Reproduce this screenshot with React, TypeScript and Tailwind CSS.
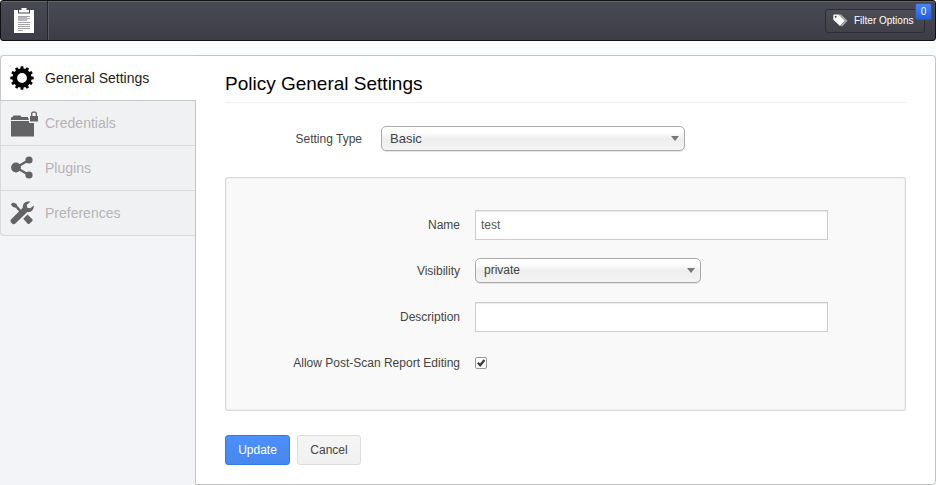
import { useState, type ReactNode } from "react";

function ClipboardIcon() {
  return (
    <svg width="20" height="25" viewBox="0 0 20 25" aria-hidden="true">
      <path fill="#fff" d="M0 2h4v3.500h12V2h4v23H0z" />
      <path fill="#fff" d="M5 2h2.500V0h5v2H15v2.500H5z" />
      <path fill="#b9b9bd" d="M4 9h9v4H4z" />
      <path stroke="#a3a3a8" strokeWidth="1" d="M4 8.500h12M13 10.500h3M4 14.500h12M4 16.500h12M4 18.500h12M4 20.500h12M4 22.500h5" />
    </svg>
  );
}

function TagsIcon() {
  return (
    <svg width="15" height="13" viewBox="0 0 15 13" aria-hidden="true">
      <path fill="#b7b7bb" d="M6 .5h2l6.500 6.200L9 12.500l-1-1 4.700-4.800z" />
      <path fill="#fff" fillRule="evenodd" d="M.3 1.200 1 .5h4.600L12 6.800 7 12 .3 5.700zM2.700 1.700a1 1 0 1 0 0 2 1 1 0 0 0 0-2z" />
    </svg>
  );
}

function GearIcon() {
  const teeth = [0, 30, 60, 90, 120, 150];
  return (
    <svg width="24" height="24" viewBox="0 0 24 24" aria-hidden="true">
      <circle cx="12" cy="12" r="7.300" fill="none" stroke="#000" strokeWidth="4.800" />
      {teeth.map((angle) => (
        <path key={angle} fill="#000" transform={`rotate(${angle} 12 12)`} d="M10.300 4 10.700.3h2.600L13.700 4zM10.300 20l.4 3.700h2.600l.4-3.700z" />
      ))}
    </svg>
  );
}

function FolderLockIcon() {
  return (
    <svg width="28" height="27" viewBox="0 0 28 27" fill="#636365" aria-hidden="true">
      <path d="M1 10V7.500L2.500 7 3.500 5.500h7L11.500 7H18v1l.7.500V10z" />
      <path d="M1 11h18v2h5v13.500H1z" />
      <path d="M20 6h8v5.500h-8z" />
      <path fill="none" stroke="#636365" strokeWidth="1.300" d="M21.700 6V3.500a1.500 1.500 0 0 1 1.300-1.300h2a1.500 1.500 0 0 1 1.300 1.300V6" />
    </svg>
  );
}

function ShareIcon() {
  return (
    <svg width="24" height="24" viewBox="0 0 24 24" fill="#636365" aria-hidden="true">
      <circle cx="6" cy="11.500" r="4.900" />
      <circle cx="19" cy="4" r="3.600" />
      <circle cx="19" cy="19" r="3.600" />
      <path fill="none" stroke="#636365" strokeWidth="2.300" d="M19 4 6 11.500 19 19" />
    </svg>
  );
}

function ToolsIcon() {
  return (
    <svg width="24" height="24" viewBox="0 0 24 24" fill="#636365" aria-hidden="true">
      <path d="M.8 3.500 2.800 1.500l3.500 1.200 1.200 2.300 4 4.500-1.800 1.800L5.700 6.800 3 6z" />
      <path d="m13.300 17.800 4.200-4.300 4.800 4.700c.5.600.5 1.200 0 1.700l-2.800 2.800c-.6.500-1.200.5-1.800 0z" />
      <path d="M20.300.8c-4-1.200-8 1.500-7.500 6L1.200 18.200c-1 1-1 2.200-.1 3.200l1.200 1.300c1 .9 2.200.8 3.100-.1l11.900-11.500c4 .5 7-3 6.400-6.500L20.300 7.200l-3-.5-.6-2.600z" />
    </svg>
  );
}

const sections = [
  { name: "General Settings", icon: <GearIcon /> },
  { name: "Credentials", icon: <FolderLockIcon /> },
  { name: "Plugins", icon: <ShareIcon /> },
  { name: "Preferences", icon: <ToolsIcon /> },
];

function SelectBox({ id, options, className }: { id: string; options: string[]; className: string }) {
  return (
    <div className={`relative max-w-full ${className}`}>
      <select
        id={id}
        className="block h-[25px] w-full appearance-none rounded-[5px] border border-[#aaa] bg-linear-to-b from-white from-20% via-[#eee] via-52% to-[#f4f4f4] px-2 leading-[23px] text-[#444] shadow-[0_1px_1px_rgba(0,0,0,0.1)]"
      >
        {options.map((option) => (
          <option key={option}>{option}</option>
        ))}
      </select>
      <svg className="pointer-events-none absolute top-[10px] right-[6px]" width="8" height="5" viewBox="0 0 8 5" aria-hidden="true">
        <path fill="#777" d="M0 0h8L4 5z" />
      </svg>
    </div>
  );
}

function FieldRow({ id, label, children }: { id: string; label: string; children: ReactNode }) {
  return (
    <div className="flex items-center gap-[15px]">
      <label htmlFor={id} className="w-[234px] shrink-0 text-right text-[12px] leading-4">
        {label}
      </label>
      {children}
    </div>
  );
}

const textBox =
  "h-[30px] w-[353px] min-w-0 border border-[#ccc] bg-white px-[5px] text-[12px] text-[#555] shadow-[inset_0_1px_1px_rgba(0,0,0,0.08)]";

export default function App() {
  const [name, setName] = useState("test");
  const [description, setDescription] = useState("");
  const [editing, setEditing] = useState(true);

  return (
    <div className="flex min-h-screen flex-col bg-[#f3f4f8] font-['Liberation_Sans',Arial,sans-serif] text-[#444]">
      <header className="flex h-[41px] items-stretch justify-between rounded-[3px] border border-[#111] bg-linear-to-b from-[#484a54] to-[#3d3d47] shadow-[inset_0_1px_0_#64646c]">
        <a href="#policies" aria-label="Policies" className="flex w-[47px] items-center justify-center border-r border-[#25252b] shadow-[1px_0_0_#5b5b63]">
          <ClipboardIcon />
        </a>
        <div className="relative mr-[10px] self-center">
          <button type="button" className="flex h-6 w-[100px] items-center gap-[6px] rounded-[3px] border border-[#2d2d33] bg-linear-to-b from-[#4c4d55] to-[#414148] pl-[7px] text-[10px] font-medium whitespace-nowrap text-white">
            <TagsIcon />
            Filter Options
          </button>
          <span className="absolute -top-[6px] -right-[7px] flex h-[17px] w-[17px] items-center justify-center rounded-[2px] border border-[#1f57c8] bg-linear-to-b from-[#4686f6] to-[#2360df] text-[10px] text-white">
            0
          </span>
        </div>
      </header>

      <div className="h-[14px] bg-[#fbfcfe]" />

      <div className="flex grow items-stretch">
        <nav className="w-[195px] shrink-0">
          <ul>
            {sections.map((section, index) => (
              <li
                key={section.name}
                className={
                  index === 0
                    ? "relative -mr-px rounded-tl-[4px] border-t border-b border-l border-[#c8c8c8] bg-white text-[#222]"
                    : "border-b border-l border-[#d9d9db] bg-[#f0f1f3] text-[#b4b4b6] last:rounded-bl-[4px]"
                }
              >
                <a href="#section" className="flex h-11 items-center text-[14px]">
                  <span className="ml-[9px] flex w-[35px] items-center">{section.icon}</span>
                  {section.name}
                </a>
              </li>
            ))}
          </ul>
        </nav>

        <main className="min-w-0 grow rounded-r-[4px] rounded-bl-[2px] border border-[#c4c4c4] bg-white px-[29px] pb-[19px]">
          <h1 className="border-b border-[#eee] pt-[16px] pb-[6px] text-[19px] leading-6 text-black">
            Policy General Settings
          </h1>

          <div className="mt-[23px] flex items-center gap-[19px]">
            <label htmlFor="setting-type" className="w-[137px] shrink-0 text-right text-[12px] leading-4">
              Setting Type
            </label>
            <SelectBox id="setting-type" options={["Basic", "Advanced"]} className="w-[304px] text-[13px]" />
          </div>

          <div className="mt-[26px] flex flex-col rounded-[2px] border border-[#d9d9d9] bg-[#f9f9f9] pt-[32px] pb-[39px] shadow-[inset_0_0_2px_rgba(0,0,0,0.12)]">
            <FieldRow id="name" label="Name">
              <input id="name" type="text" value={name} onChange={(e) => setName(e.target.value)} className={textBox} />
            </FieldRow>
            <div className="mt-[18px]">
              <FieldRow id="visibility" label="Visibility">
                <SelectBox id="visibility" options={["private", "shared"]} className="w-[226px] text-[12px]" />
              </FieldRow>
            </div>
            <div className="mt-[19px]">
              <FieldRow id="description" label="Description">
                <input id="description" type="text" value={description} onChange={(e) => setDescription(e.target.value)} className={textBox} />
              </FieldRow>
            </div>
            <div className="mt-[23px]">
              <FieldRow id="editing" label="Allow Post-Scan Report Editing">
                <span className="relative flex">
                  <input
                    id="editing"
                    type="checkbox"
                    checked={editing}
                    onChange={(e) => setEditing(e.target.checked)}
                    className="h-3 w-3 appearance-none rounded-[2px] border border-[#999] bg-white"
                  />
                  {editing && (
                    <svg className="pointer-events-none absolute inset-0" width="12" height="12" viewBox="0 0 12 12" aria-hidden="true">
                      <path fill="none" stroke="#3b3b45" strokeWidth="2.300" d="m2.800 5.800 2.400 2.500L9.400 3" />
                    </svg>
                  )}
                </span>
              </FieldRow>
            </div>
          </div>

          <div className="mt-[24px] flex gap-[7px]">
            <button type="button" className="h-[30px] w-[65px] rounded-[3px] border border-[#3079ed] bg-linear-to-b from-[#4d90fe] to-[#4787ed] text-[12px] text-white">
              Update
            </button>
            <button type="button" className="h-[30px] w-16 rounded-[3px] border border-[#dcdcdc] bg-linear-to-b from-[#f5f5f5] to-[#f1f1f1] text-[12px] text-[#444]">
              Cancel
            </button>
          </div>
        </main>
      </div>
    </div>
  );
}
